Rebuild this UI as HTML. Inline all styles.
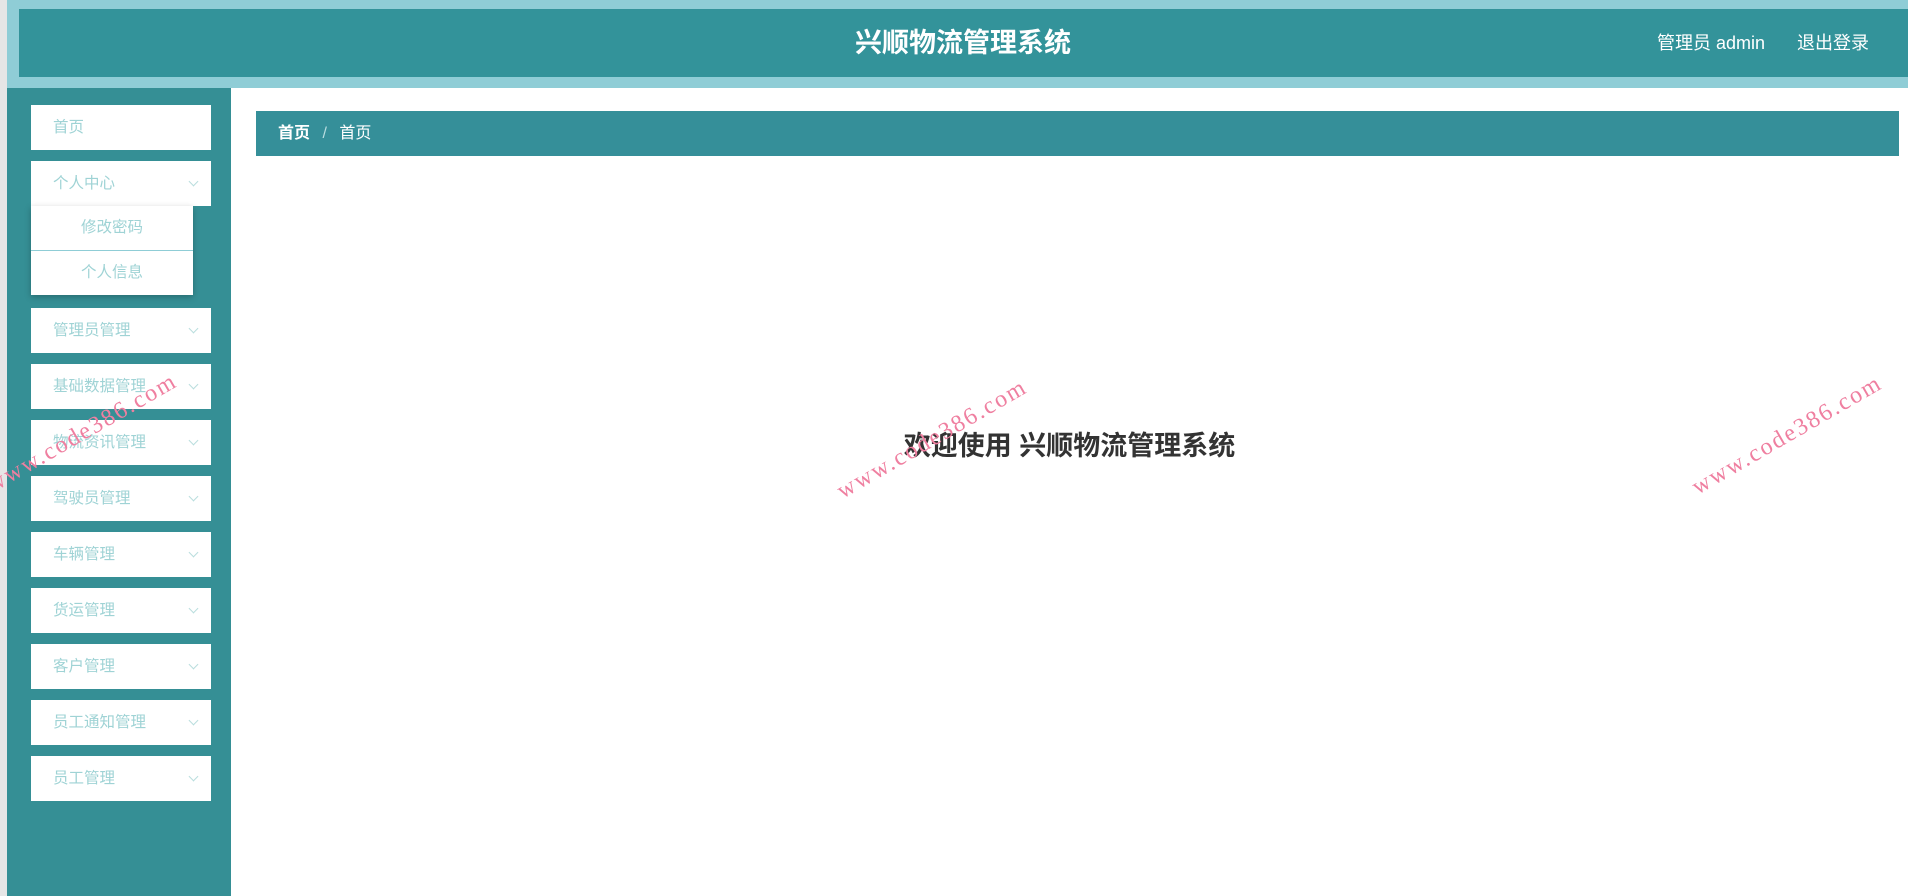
<!DOCTYPE html>
<html><head><meta charset="utf-8"><style>
*{margin:0;padding:0;box-sizing:border-box}
body{width:1908px;height:896px;overflow:hidden;background:#fff;position:relative;font-family:"Liberation Sans","Noto Sans CJK SC",sans-serif}
.lstrip{position:absolute;left:0;top:0;width:7px;height:896px;background:#e6e6e6}
.hbg{position:absolute;left:7px;top:0;right:0;height:88px;background:#8fcdd6}
.hdr{position:absolute;left:19px;top:9px;right:0;height:68px;background:#33939a}
.title{position:absolute;left:0;right:0;top:9px;height:68px;line-height:68px;text-align:center;color:#fff;font-size:27px;font-weight:bold;padding-left:18px}
.user{position:absolute;top:9px;height:68px;line-height:68px;color:#fff;font-size:18px}
.side{position:absolute;left:7px;top:88px;width:224px;height:808px;background:#358f95}
.item{position:absolute;left:31px;width:180px;height:45px;background:#fff;color:#9fd3d5;font-size:15.5px;line-height:45px;padding-left:22px}
.item .ar{position:absolute;right:14px;top:17px;width:7px;height:7px;border-right:1px solid #b9dede;border-bottom:1px solid #b9dede;transform:rotate(45deg)}
.sub{position:absolute;left:31px;top:206px;width:162px;height:89px;background:#fff;box-shadow:0 2px 6px rgba(0,0,0,.25)}
.sub div{height:44px;line-height:44px;text-align:center;color:#9fd3d5;font-size:15.5px}
.sub div:first-child{border-bottom:1px solid #8fcdd6;height:45px}
.bc{position:absolute;left:256px;top:111px;width:1643px;height:45px;background:#358f99;color:#fff;font-size:16px;line-height:45px;padding-left:22px}
.welcome{position:absolute;left:0;width:100%;padding-left:231px;top:424px;text-align:center;font-size:27px;font-weight:bold;color:#333}
.wm{position:absolute;font-family:"Liberation Serif",serif;font-size:24px;letter-spacing:2px;color:#ef7fa0;transform-origin:0 100%;transform:rotate(-30deg);white-space:nowrap}
</style></head><body>
<div class="lstrip"></div>
<div class="hbg"></div>
<div class="hdr"></div>
<div class="title">兴顺物流管理系统</div>
<div class="user" style="left:1657px">管理员 admin</div>
<div class="user" style="left:1797px">退出登录</div>
<div class="side"></div>
<div class="item" style="top:105px">首页</div>
<div class="item" style="top:161px">个人中心<span class="ar"></span></div>
<div class="sub"><div>修改密码</div><div>个人信息</div></div>
<div class="item" style="top:308px">管理员管理<span class="ar"></span></div>
<div class="item" style="top:364px">基础数据管理<span class="ar"></span></div>
<div class="item" style="top:420px">物流资讯管理<span class="ar"></span></div>
<div class="item" style="top:476px">驾驶员管理<span class="ar"></span></div>
<div class="item" style="top:532px">车辆管理<span class="ar"></span></div>
<div class="item" style="top:588px">货运管理<span class="ar"></span></div>
<div class="item" style="top:644px">客户管理<span class="ar"></span></div>
<div class="item" style="top:700px">员工通知管理<span class="ar"></span></div>
<div class="item" style="top:756px">员工管理<span class="ar"></span></div>
<div class="bc"><b>首页</b> <span style="color:#b8dde0;margin:0 8px">/</span> 首页</div>
<div class="welcome">欢迎使用 兴顺物流管理系统</div>
<div class="wm" style="left:-4px;top:472px">www.code386.com</div>
<div class="wm" style="left:846px;top:478px">www.code386.com</div>
<div class="wm" style="left:1701px;top:474px">www.code386.com</div>
</body></html>
